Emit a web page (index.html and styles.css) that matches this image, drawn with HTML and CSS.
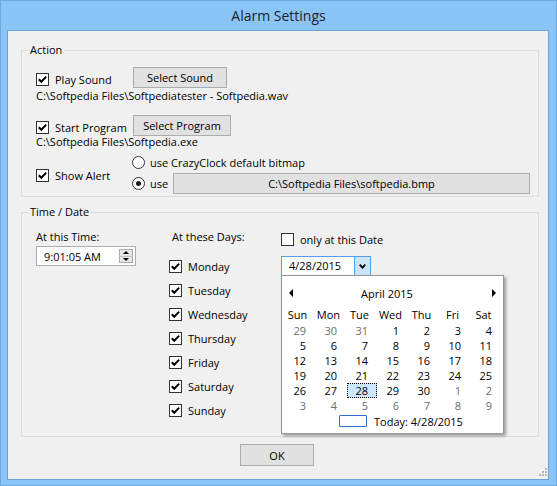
FILE: index.html
```html
<!DOCTYPE html>
<html>
<head>
<meta charset="utf-8">
<link rel="stylesheet" href="styles.css">
</head>
<body>
<div class="window">
  <div class="titlebar">Alarm Settings</div>
  <div class="client">
    <fieldset class="group action">
      <legend>Action</legend>
      <div class="group-body">
        <div class="line row-sound">
          <label class="chk chk-fixed"><span class="box"><svg viewBox="0 0 11 11" width="11" height="11"><polyline points="1.8,5.3 4.3,7.8 9.2,2.6" fill="none" stroke="#000" stroke-width="2"/></svg></span>Play Sound</label>
          <button class="btn btn-sound">Select Sound</button>
        </div>
        <div class="path path1">C:\Softpedia Files\Softpediatester - Softpedia.wav</div>
        <div class="line row-prog">
          <label class="chk chk-fixed"><span class="box"><svg viewBox="0 0 11 11" width="11" height="11"><polyline points="1.8,5.3 4.3,7.8 9.2,2.6" fill="none" stroke="#000" stroke-width="2"/></svg></span>Start Program</label>
          <button class="btn btn-prog">Select Program</button>
        </div>
        <div class="path path2">C:\Softpedia Files\Softpedia.exe</div>
        <div class="alert">
          <div class="alert-left">
            <label class="chk"><span class="box"><svg viewBox="0 0 11 11" width="11" height="11"><polyline points="1.8,5.3 4.3,7.8 9.2,2.6" fill="none" stroke="#000" stroke-width="2"/></svg></span>Show Alert</label>
          </div>
          <div class="alert-right">
            <div class="radio-row r1"><span class="radio"></span>use CrazyClock default bitmap</div>
            <div class="radio-row r2"><span class="radio on"></span><span class="use">use</span><button class="btn btn-bmp">C:\Softpedia Files\softpedia.bmp</button></div>
          </div>
        </div>
      </div>
    </fieldset>

    <fieldset class="group time">
      <legend>Time / Date</legend>
      <div class="group-body cols">
        <div class="col-time">
          <div class="caption">At this Time:</div>
          <div class="timebox">
            <span class="time-text">9:01:05 AM</span>
            <span class="spin">
              <span class="spin-half"><span class="tri-up"></span></span>
              <span class="spin-half"><span class="tri-down"></span></span>
            </span>
          </div>
        </div>
        <div class="col-days">
          <div class="caption cap-days">At these Days:</div>
          <div class="days">
            <label class="chk day"><span class="box"><svg viewBox="0 0 11 11" width="11" height="11"><polyline points="1.8,5.3 4.3,7.8 9.2,2.6" fill="none" stroke="#000" stroke-width="2"/></svg></span>Monday</label>
            <label class="chk day"><span class="box"><svg viewBox="0 0 11 11" width="11" height="11"><polyline points="1.8,5.3 4.3,7.8 9.2,2.6" fill="none" stroke="#000" stroke-width="2"/></svg></span>Tuesday</label>
            <label class="chk day"><span class="box"><svg viewBox="0 0 11 11" width="11" height="11"><polyline points="1.8,5.3 4.3,7.8 9.2,2.6" fill="none" stroke="#000" stroke-width="2"/></svg></span>Wednesday</label>
            <label class="chk day"><span class="box"><svg viewBox="0 0 11 11" width="11" height="11"><polyline points="1.8,5.3 4.3,7.8 9.2,2.6" fill="none" stroke="#000" stroke-width="2"/></svg></span>Thursday</label>
            <label class="chk day"><span class="box"><svg viewBox="0 0 11 11" width="11" height="11"><polyline points="1.8,5.3 4.3,7.8 9.2,2.6" fill="none" stroke="#000" stroke-width="2"/></svg></span>Friday</label>
            <label class="chk day"><span class="box"><svg viewBox="0 0 11 11" width="11" height="11"><polyline points="1.8,5.3 4.3,7.8 9.2,2.6" fill="none" stroke="#000" stroke-width="2"/></svg></span>Saturday</label>
            <label class="chk day"><span class="box"><svg viewBox="0 0 11 11" width="11" height="11"><polyline points="1.8,5.3 4.3,7.8 9.2,2.6" fill="none" stroke="#000" stroke-width="2"/></svg></span>Sunday</label>
          </div>
        </div>
        <div class="col-date">
          <label class="chk date-only"><span class="box"></span>only at this Date</label>
          <div class="combo">
            <span class="combo-text">4/28/2015</span>
            <span class="combo-btn"><svg viewBox="0 0 7 5" width="7" height="5"><polyline points="0.7,0.7 3.5,3.6 6.3,0.7" fill="none" stroke="#000" stroke-width="1.8"/></svg></span>
            <div class="popup">
              <div class="cal-head">
                <span class="arr-left"></span>
                <span class="month">April 2015</span>
                <span class="arr-right"></span>
              </div>
              <div class="dow"><span>Sun</span><span>Mon</span><span>Tue</span><span>Wed</span><span>Thu</span><span>Fri</span><span>Sat</span></div>
              <div class="grid">
                <span class="gray">29</span><span class="gray">30</span><span class="gray">31</span><span>1</span><span>2</span><span>3</span><span>4</span>
                <span>5</span><span>6</span><span>7</span><span>8</span><span>9</span><span>10</span><span>11</span>
                <span>12</span><span>13</span><span>14</span><span>15</span><span>16</span><span>17</span><span>18</span>
                <span>19</span><span>20</span><span>21</span><span>22</span><span>23</span><span>24</span><span>25</span>
                <span>26</span><span>27</span><span class="sel">28</span><span>29</span><span>30</span><span class="gray">1</span><span class="gray">2</span>
                <span class="gray">3</span><span class="gray">4</span><span class="gray">5</span><span class="gray">6</span><span class="gray">7</span><span class="gray">8</span><span class="gray">9</span>
              </div>
              <div class="today"><span class="today-box"></span>Today: 4/28/2015</div>
            </div>
          </div>
        </div>
      </div>
    </fieldset>

    <div class="footer"><button class="btn btn-ok">OK</button></div>

    <svg class="grip" width="8" height="8" viewBox="0 0 8 8">
      <rect x="6" y="0" width="2" height="2" fill="#b9b9b9"/>
      <rect x="3" y="3" width="2" height="2" fill="#b9b9b9"/>
      <rect x="6" y="3" width="2" height="2" fill="#b9b9b9"/>
      <rect x="0" y="6" width="2" height="2" fill="#b9b9b9"/>
      <rect x="3" y="6" width="2" height="2" fill="#b9b9b9"/>
      <rect x="6" y="6" width="2" height="2" fill="#b9b9b9"/>
    </svg>
  </div>
</div>
</body>
</html>
```

FILE: styles.css
```css
html, body {
  margin: 0;
  padding: 0;
}
body {
  font-family: "Open Sans", "Noto Sans", sans-serif;
  font-size: 11px;
  color: #000;
  background: #8ac5f8;
}
.window {
  width: 557px;
  height: 486px;
  box-sizing: border-box;
  border: 1px solid #6ea8dc;
  background: #8ac5f8;
  display: flex;
  flex-direction: column;
}
.titlebar {
  height: 29px;
  line-height: 29px;
  text-align: center;
  font-size: 14px;
  color: #1e1e1e;
}
.client {
  margin-left: 6px;
  width: 542px;
  height: 450px;
  box-sizing: border-box;
  border: 1px solid #6aa1d8;
  background: #f0f0f0;
  position: relative;
  padding-top: 11px;
}

.group {
  margin: 0 0 0 13px;
  width: 518px;
  min-width: 0;
  box-sizing: border-box;
  border: 1px solid #dcdcdc;
  padding: 0;
}
.group legend {
  margin-left: 6px;
  padding: 0 2px;
  line-height: 16px;
  height: 16px;
}
.group-body {
  padding-left: 14px;
}
.action .group-body {
  padding-bottom: 2px;
}
.time {
  margin-top: 7px;
}
.time .group-body {
  padding-bottom: 14px;
}

.line {
  display: flex;
  align-items: flex-start;
}
.chk {
  display: flex;
  align-items: center;
  height: 13px;
  line-height: 13px;
  white-space: nowrap;
}
.chk-fixed {
  width: 97px;
  margin-top: 6px;
}
.box {
  width: 13px;
  height: 13px;
  box-sizing: border-box;
  border: 1px solid #333;
  background: #fff;
  margin-right: 6px;
  flex: none;
  display: block;
}
.box svg {
  display: block;
}
.btn {
  font: inherit;
  color: #000;
  background: #e1e1e1;
  border: 1px solid #adadad;
  padding: 0;
  margin: 0;
  height: 21px;
  box-sizing: border-box;
}
.row-sound {
  margin-top: 9px;
  height: 21px;
}
.btn-sound {
  width: 94px;
}
.row-prog {
  margin-top: 12px;
  height: 21px;
}
.btn-prog {
  width: 98px;
}
.path {
  line-height: 14px;
  white-space: nowrap;
}
.path1 {
  margin-top: 1px;
}
.path2 {
  margin-top: -1px;
}
.alert {
  display: flex;
  margin-top: 5px;
}
.alert-left {
  width: 96px;
  padding-top: 15px;
}
.radio-row {
  display: flex;
  align-items: center;
  white-space: nowrap;
}
.r1 {
  height: 16px;
  margin-bottom: 3px;
}
.r2 {
  height: 21px;
}
.radio {
  width: 13px;
  height: 13px;
  box-sizing: border-box;
  border: 1px solid #333;
  border-radius: 50%;
  background: #fff;
  margin-right: 5px;
  display: flex;
  align-items: center;
  justify-content: center;
  flex: none;
}
.radio.on::after {
  content: "";
  width: 5px;
  height: 5px;
  border-radius: 50%;
  background: #1a1a1a;
}
.use {
  width: 23px;
}
.btn-bmp {
  width: 357px;
}

.cols {
  display: flex;
}
.col-time {
  width: 133px;
  flex: none;
}
.col-days {
  width: 112px;
  flex: none;
}
.col-date {
  flex: none;
}
.caption {
  margin-top: 10px;
  line-height: 14px;
}
.cap-days {
  padding-left: 3px;
}
.timebox {
  margin-top: 2px;
  width: 100px;
  height: 20px;
  box-sizing: border-box;
  border: 1px solid #abadb3;
  background: #fff;
  display: flex;
  align-items: center;
  padding-left: 7px;
  padding-right: 2px;
}
.time-text {
  flex: 1;
}
.spin {
  width: 14px;
  height: 14px;
  box-sizing: border-box;
  border: 1px solid #acacac;
  background: #e6e6e6;
  display: flex;
  flex-direction: column;
}
.spin-half {
  flex: 1;
  display: flex;
  align-items: center;
  justify-content: center;
}
.spin-half + .spin-half {
  border-top: 1px solid #c4c4c4;
}
.tri-up {
  width: 0;
  height: 0;
  border-left: 3px solid transparent;
  border-right: 3px solid transparent;
  border-bottom: 3px solid #000;
}
.tri-down {
  width: 0;
  height: 0;
  border-left: 3px solid transparent;
  border-right: 3px solid transparent;
  border-top: 3px solid #000;
}
.days {
  margin-top: 10px;
}
.day {
  height: 24px;
}
.date-only {
  margin-top: 13px;
}
.combo {
  margin-top: 10px;
  width: 90px;
  height: 20px;
  box-sizing: border-box;
  border: 1px solid #569de5;
  background: #fff;
  display: flex;
  position: relative;
}
.combo-text {
  flex: 1;
  padding-left: 7px;
  line-height: 18px;
}
.combo-btn {
  width: 16px;
  box-sizing: border-box;
  border-left: 1px solid #569de5;
  background: #cce4f7;
  display: flex;
  align-items: center;
  justify-content: center;
}
.combo-btn svg {
  display: block;
}
.popup {
  position: absolute;
  left: -1px;
  top: 100%;
  width: 223px;
  box-sizing: border-box;
  border: 1px solid #979797;
  background: #fff;
  box-shadow: 2px 2px 3px rgba(0, 0, 0, 0.35);
  padding: 9px 4px 4px 0;
  z-index: 2;
}
.cal-head {
  height: 16px;
  display: flex;
  align-items: center;
  padding-left: 7px;
  padding-right: 3px;
}
.arr-left {
  width: 0;
  height: 0;
  border-top: 4px solid transparent;
  border-bottom: 4px solid transparent;
  border-right: 4px solid #000;
}
.arr-right {
  width: 0;
  height: 0;
  border-top: 4px solid transparent;
  border-bottom: 4px solid transparent;
  border-left: 4px solid #000;
}
.month {
  flex: 1;
  text-align: center;
  padding-right: 11px;
}
.dow {
  margin-top: 6px;
  display: grid;
  grid-template-columns: repeat(7, 31px);
  height: 16px;
  line-height: 16px;
  text-align: center;
}
.grid {
  display: grid;
  grid-template-columns: repeat(7, 31px);
  grid-auto-rows: 15px;
  line-height: 15px;
}
.grid span {
  text-align: right;
  padding-right: 7px;
}
.grid .gray {
  color: #6d6d6d;
}
.grid .sel {
  margin-left: 3px;
  margin-right: -2px;
  padding-right: 8px;
  line-height: 13px;
  border: 1px dotted #000;
  background: #cce8ff;
}
.today {
  height: 16px;
  display: flex;
  align-items: center;
  padding-left: 57px;
  white-space: nowrap;
}
.today-box {
  width: 28px;
  height: 12px;
  box-sizing: border-box;
  border: 1px solid #2e6fcc;
  border-radius: 1px;
  margin-right: 7px;
}
.footer {
  margin-top: 7px;
  padding-left: 232px;
}
.btn-ok {
  width: 74px;
  height: 22px;
}
.grip {
  position: absolute;
  right: 1px;
  bottom: 3px;
}
```
